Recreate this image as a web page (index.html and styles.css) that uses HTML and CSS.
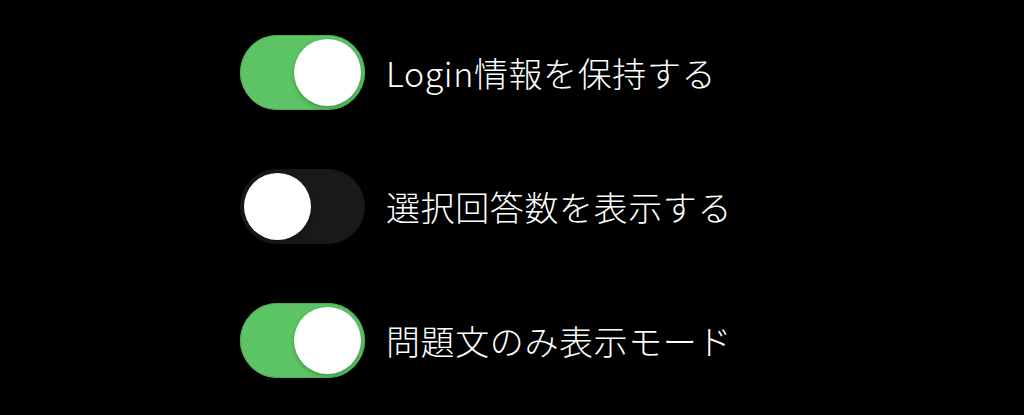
FILE: index.html
```html
<!DOCTYPE html>
<html lang="ja">
<head>
    <meta charset="UTF-8">
    <meta name="viewport" content="width=device-width, initial-scale=1.0">
    <title>設定</title>
    <link rel="stylesheet" href="styles.css">
</head>
<body>
    <main class="settings">
        <div class="setting-row">
            <div class="toggle on"><div class="knob"></div></div>
            <div class="setting-label">Login情報を保持する</div>
        </div>
        <div class="setting-row">
            <div class="toggle"><div class="knob"></div></div>
            <div class="setting-label">選択回答数を表示する</div>
        </div>
        <div class="setting-row">
            <div class="toggle on"><div class="knob"></div></div>
            <div class="setting-label">問題文のみ表示モード</div>
        </div>
    </main>
</body>
</html>
```
FILE: styles.css
```css
body {
    margin: 0;
    background-color: #000;
    color: #fff;
    font-family: "Noto Sans CJK JP", "Noto Sans", sans-serif;
}

.settings {
    display: flex;
    flex-direction: column;
    gap: 59px;
    padding: 35px 0 0 240px;
}

.setting-row {
    display: flex;
    align-items: center;
    gap: 21px;
}

.toggle {
    width: 125px;
    height: 75px;
    border-radius: 38px;
    background-color: #19191a;
    display: flex;
    align-items: center;
    justify-content: flex-start;
    padding: 0 4px;
    box-sizing: border-box;
}

.toggle.on {
    background-color: #5cc464;
    box-shadow: inset 0 0 0 1px #4fae57;
    justify-content: flex-end;
}

.knob {
    width: 67px;
    height: 67px;
    border-radius: 50%;
    background-color: #fff;
    box-shadow: 0 2px 4px rgba(0, 0, 0, 0.25);
}

.setting-label {
    font-size: 34px;
    font-weight: 300;
    letter-spacing: 0.6px;
    line-height: 1;
}
```
